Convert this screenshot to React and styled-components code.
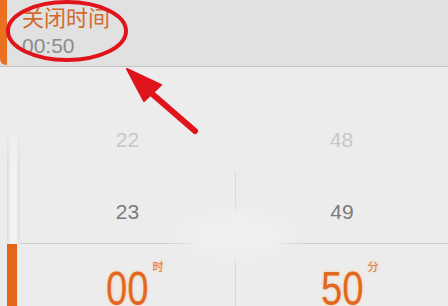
import React from 'react';
import styled, { createGlobalStyle } from 'styled-components';

const GlobalStyle = createGlobalStyle`
  html, body {
    margin: 0;
    padding: 0;
    background: #ececec;
  }
  body {
    width: 448px;
    height: 306px;
    overflow: hidden;
    font-family: "Liberation Sans", "Noto Sans CJK SC", sans-serif;
  }
`;

const Screen = styled.div`
  position: relative;
  width: 448px;
  height: 306px;
  overflow: hidden;
  background: #ececec;
`;

const Header = styled.div`
  display: flex;
  height: 66px;
  background: #e1e1e1;
  border-bottom: 1px solid #c2c2c2;
`;

const Accent = styled.div`
  width: 7px;
  height: 65px;
  background: #e8701f;
  border-bottom-left-radius: 6px;
`;

const HeaderText = styled.div`
  display: flex;
  flex-direction: column;
  padding: 5px 0 0 15px;
`;

const Title = styled.div`
  font-family: "Noto Sans CJK SC", sans-serif;
  font-size: 22px;
  line-height: 1;
  color: #d36a2e;
`;

const Value = styled.div`
  margin-top: 8px;
  font-size: 21px;
  line-height: 1;
  color: #8c8c8c;
`;

const Picker = styled.div`
  display: grid;
  grid-template-columns: 20px 215px 1fr;
  grid-template-rows: 72px 72px 1fr;
  padding-top: 32px;
`;

const Rail = styled.div`
  grid-row: ${({ $selected }) => ($selected ? 'auto' : 'span 2')};
  display: flex;
  padding-left: 7px;
  border-top: ${({ $selected }) => ($selected ? '1px solid transparent' : 'none')};
`;

const RailStrip = styled.div`
  width: ${({ $selected }) => ($selected ? '10px' : '13px')};
  background: ${({ $selected }) =>
    $selected
      ? '#e4661b'
      : 'linear-gradient(to bottom, rgba(236,236,236,1) 20%, rgba(236,236,236,0) 45%), linear-gradient(to right, #dcdcdc, #f2f2f2 30%, #f2f2f2 70%, #dcdcdc)'};
`;

const Cell = styled.div`
  display: flex;
  align-items: center;
  justify-content: center;
  padding-top: 8px;
  font-size: 21px;
  line-height: 1;
  color: ${({ $near }) => ($near ? '#7b7b7b' : '#c8c8c8')};
  border-left: ${({ $divider }) => ($divider ? '1px solid #dadada' : 'none')};
`;

const Selected = styled.div`
  display: flex;
  justify-content: center;
  padding-top: 20px;
  height: 62px;
  border-top: 1px solid #cfcfcf;
  border-left: ${({ $divider }) => ($divider ? '1px solid #d6d6d6' : 'none')};
`;

const BigNumber = styled.span`
  position: relative;
  display: inline-block;
  font-size: 49px;
  line-height: 1;
  color: #e0691f;
  text-shadow: 0 0 3px rgba(255, 190, 140, 0.9);
  transform: scaleX(0.78);
`;

const Unit = styled.sup`
  position: absolute;
  top: -3px;
  right: -17px;
  font-family: "Noto Sans CJK SC", sans-serif;
  font-size: 11px;
  line-height: 1;
  color: #d8722f;
  transform: scaleX(1.28);
`;

const Smudge = styled.div`
  position: absolute;
  left: 168px;
  top: 205px;
  width: 136px;
  height: 60px;
  background: radial-gradient(ellipse at center, #efefef 45%, rgba(239, 239, 239, 0) 72%);
  pointer-events: none;
`;

const Markup = styled.svg`
  position: absolute;
  left: 0;
  top: 0;
  pointer-events: none;
`;

const App = () => (
  <>
    <GlobalStyle />
    <Screen>
      <Header>
        <Accent />
        <HeaderText>
          <Title>关闭时间</Title>
          <Value>00:50</Value>
        </HeaderText>
      </Header>
      <Picker>
        <Rail><RailStrip /></Rail>
        <Cell>22</Cell>
        <Cell>48</Cell>

        <Cell $near>23</Cell>
        <Cell $near $divider>49</Cell>

        <Rail $selected><RailStrip $selected /></Rail>
        <Selected>
          <BigNumber>00<Unit>时</Unit></BigNumber>
        </Selected>
        <Selected $divider>
          <BigNumber>50<Unit>分</Unit></BigNumber>
        </Selected>
      </Picker>
      <Smudge />
      <Markup width="448" height="306" viewBox="0 0 448 306">
        <ellipse cx="67" cy="31" rx="59" ry="29" fill="none" stroke="#e0141b" strokeWidth="4" />
        <line x1="150" y1="92" x2="195" y2="131" stroke="#e0141b" strokeWidth="6" strokeLinecap="round" />
        <polygon points="127,69 161,85 144,101" fill="#e0141b" stroke="#e0141b" strokeWidth="2" strokeLinejoin="round" />
      </Markup>
    </Screen>
  </>
);

export default App;
